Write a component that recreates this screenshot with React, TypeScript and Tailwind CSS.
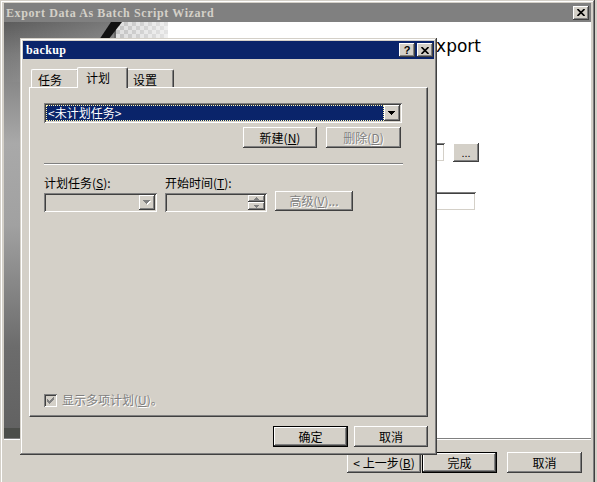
import React from "react";

// win2000 classic bevels
const face = "bg-[#d4d0c8]";
const raised = "shadow-[inset_-1px_-1px_0_#404040,inset_1px_1px_0_#ffffff,inset_-2px_-2px_0_#808080]";
const frame = "shadow-[inset_-1px_-1px_0_#404040,inset_1px_1px_0_#d4d0c8,inset_-2px_-2px_0_#808080,inset_2px_2px_0_#ffffff]";
const sunken = "shadow-[inset_1px_1px_0_#808080,inset_-1px_-1px_0_#ffffff,inset_2px_2px_0_#404040,inset_-2px_-2px_0_#d4d0c8]";
const cjk = "font-['Noto_Sans_CJK_SC','Noto_Sans',sans-serif]";
const grayText = "text-[#808080] [text-shadow:1px_1px_0_#ffffff]";

function Key({ k }: { k: string }) {
  return (
    <>
      (<span className="underline underline-offset-1">{k}</span>)
    </>
  );
}

function Button({
  className = "",
  isDefault = false,
  disabled = false,
  children,
}: {
  className?: string;
  isDefault?: boolean;
  disabled?: boolean;
  children: React.ReactNode;
}) {
  return (
    <div className={`${className} ${isDefault ? "border border-black" : ""} flex`}>
      <div
        className={`flex-1 flex items-center justify-center ${face} ${raised} text-[12px] leading-[14px] whitespace-nowrap ${
          disabled ? grayText : "text-black"
        }`}
      >
        {children}
      </div>
    </div>
  );
}

function CapBtn({ className = "", children }: { className?: string; children: React.ReactNode }) {
  return (
    <div className={`w-[16px] h-[14px] ${face} ${raised} flex items-center justify-center ${className}`}>
      {children}
    </div>
  );
}

function XGlyph() {
  return (
    <svg width="8" height="7" viewBox="0 0 8 7" className="block">
      <path d="M0.5 0 L7.5 7 M7.5 0 L0.5 7" stroke="#000" strokeWidth="1.6" />
    </svg>
  );
}

function Arrow({ gray = false }: { gray?: boolean }) {
  return (
    <svg width="8" height="5" viewBox="0 0 8 5" className="block" shapeRendering="crispEdges">
      {gray && <path d="M1 1h7v1h-1v1h-1v1h-1v1h-1v-1h-1v-1h-1v-1h-1z" fill="#ffffff" />}
      <path d="M0 0h7v1h-1v1h-1v1h-1v1h-1v-1h-1v-1h-1v-1h-1z" fill={gray ? "#808080" : "#000"} />
    </svg>
  );
}

function SpinArrow({ up }: { up?: boolean }) {
  return (
    <svg width="5" height="3" viewBox="0 0 5 3" className="block" shapeRendering="crispEdges">
      {up ? (
        <path d="M2 0h1v1h1v1h1v1h-5v-1h1v-1h1z" fill="#808080" />
      ) : (
        <path d="M0 0h5v1h-1v1h-1v1h-1v-1h-1v-1h-1z" fill="#808080" />
      )}
    </svg>
  );
}

function Banner() {
  return (
    <svg width="164" height="416" className="block">
      <defs>
        <linearGradient id="bn" x1="0" y1="0" x2="0" y2="1">
          <stop offset="0" stopColor="#5c5c5c" />
          <stop offset="0.08" stopColor="#7a7a7a" />
          <stop offset="0.3" stopColor="#a9a9a9" />
          <stop offset="0.5" stopColor="#a1a1a1" />
          <stop offset="0.8" stopColor="#6c6c6c" />
          <stop offset="1" stopColor="#626262" />
        </linearGradient>
        <linearGradient id="hz" x1="0" y1="0" x2="1" y2="0">
          <stop offset="0" stopColor="#ffffff" stopOpacity="0" />
          <stop offset="1" stopColor="#ffffff" stopOpacity="0.18" />
        </linearGradient>
        <pattern id="chk" width="8" height="8" patternUnits="userSpaceOnUse">
          <rect width="8" height="8" fill="#dedede" />
          <rect width="4" height="4" fill="#c2c2c2" />
          <rect x="4" y="4" width="4" height="4" fill="#c2c2c2" />
        </pattern>
        <linearGradient id="fade" x1="0" y1="0" x2="1" y2="0">
          <stop offset="0" stopColor="#ffffff" stopOpacity="0" />
          <stop offset="1" stopColor="#ffffff" stopOpacity="0.55" />
        </linearGradient>
      </defs>
      <rect width="164" height="406" fill="url(#bn)" />
      <rect width="110" height="60" fill="url(#hz)" />
      <rect y="406" width="164" height="10" fill="#4c4e4a" />
      <rect x="112" width="52" height="60" fill="url(#chk)" />
      <rect x="112" width="52" height="60" fill="url(#fade)" />
      <polygon points="107,0 118,0 104,18 95,18" fill="#111111" />
    </svg>
  );
}

function Tab({ label, active = false }: { label: string; active?: boolean }) {
  return (
    <div
      className={`${face} border-t border-l border-r border-t-white border-l-white border-r-[#404040] shadow-[inset_-1px_0_0_#808080] rounded-tl-[2px] rounded-tr-[2px] text-[12px] leading-[14px] text-black pt-[3px] ${
        active ? "w-[51px] h-[21px] -mx-[2px] -mb-[1px] pl-[8px] relative z-10" : "w-[48px] h-[18px] pl-[6px]"
      }`}
    >
      {label}
    </div>
  );
}

export default function App() {
  return (
    <div className={`relative w-[597px] h-[482px] overflow-hidden ${face} ${cjk}`}>
      {/* wizard behind */}
      <div className={`absolute left-0 top-0 w-[595px] h-[500px] ${face} ${frame} px-[4px] pt-[3px] flex flex-col`}>
        <div className="h-[19px] bg-[#808080] flex items-center justify-between pl-[2px] pr-[2px]">
          <span className="font-['Liberation_Serif',serif] font-bold text-[12px] leading-[14px] tracking-[0.6px] text-[#d4d0c8]">
            Export Data As Batch Script Wizard
          </span>
          <CapBtn>
            <XGlyph />
          </CapBtn>
        </div>
        <div className="flex h-[416px]">
          <div className="w-[164px]">
            <Banner />
          </div>
          <div className="flex-1 bg-white flex flex-col">
            <div className="mt-[14px] ml-[20px] w-[293px] flex justify-end whitespace-nowrap font-['DejaVu_Sans',sans-serif] text-[17px] leading-[20px] text-black">
              export
            </div>
            <div className="mt-[87px] ml-[77px] flex items-center gap-[8px]">
              <div className={`w-[200px] h-[19px] bg-white ${sunken}`} />
              <Button className="w-[26px] h-[19px]">
                <span className="font-['Liberation_Sans',sans-serif] text-[11px]">...</span>
              </Button>
            </div>
            <div className={`mt-[30px] ml-[77px] w-[231px] h-[19px] bg-white ${sunken}`} />
          </div>
        </div>
        <div className="h-[2px] border-t border-t-[#808080] border-b border-b-white" />
        <div className="flex justify-end pt-[12px] pr-[9px]">
          <Button className="w-[74px] h-[21px]">&lt; 上一步<Key k="B" /></Button>
          <Button className="w-[75px] h-[21px] ml-[1px]" isDefault>
            完成
          </Button>
          <Button className="w-[75px] h-[21px] ml-[10px]">取消</Button>
        </div>
      </div>

      {/* backup dialog */}
      <div className={`absolute left-[20px] top-[38px] w-[417px] h-[417px] ${face} ${frame} p-[3px] flex flex-col`}>
        <div className="h-[18px] bg-[#0a246a] flex items-center pl-[3px] pr-[1px]">
          <span className="flex-1 font-['Liberation_Serif',serif] font-bold text-white text-[12px] leading-[14px] tracking-[0.4px]">
            backup
          </span>
          <CapBtn>
            <span className="font-['Liberation_Sans',sans-serif] font-bold text-[11px] leading-[12px] text-black">?</span>
          </CapBtn>
          <CapBtn className="ml-[2px]">
            <XGlyph />
          </CapBtn>
        </div>

        <div className="flex flex-col px-[6px]">
          <div className="mt-[8px] h-[20px] flex items-end pl-[2px]">
            <Tab label="任务" />
            <Tab label="计划" active />
            <Tab label="设置" />
          </div>

          <div className="h-[330px] bg-[#d4d0c8] border border-t-white border-l-white border-r-[#404040] border-b-[#404040] shadow-[inset_-1px_-1px_0_#808080] flex flex-col pl-[14px] pt-[15px] pb-[9px] text-[12px] leading-[14px]">
            <div className={`w-[358px] h-[20px] bg-white ${sunken} p-[2px] flex`}>
              <div className="flex-1 bg-[#0a246a] outline outline-1 outline-dotted outline-[#fff8b0] -outline-offset-1 text-white leading-[16px] pl-[2px]">
                &lt;未计划任务&gt;
              </div>
              <div className={`w-[16px] ${face} ${raised} flex items-center justify-center`}>
                <Arrow />
              </div>
            </div>

            <div className="w-[358px] mt-[4px] flex justify-end gap-[9px] pr-[1px]">
              <Button className="w-[74px] h-[21px]">
                新建<Key k="N" />
              </Button>
              <Button className="w-[75px] h-[21px]" disabled>
                删除<Key k="D" />
              </Button>
            </div>

            <div className="w-[359px] mt-[15px] h-[2px] border-t border-t-[#808080] border-b border-b-white" />

            <div className="mt-[11px] flex text-black">
              <span className="w-[121px]">
                计划任务<Key k="S" />:
              </span>
              <span>
                开始时间<Key k="T" />:
              </span>
            </div>

            <div className="mt-[3px] flex items-start">
              <div className={`w-[113px] h-[19px] ${face} ${sunken} p-[2px] flex justify-end`}>
                <div className={`w-[16px] ${face} ${raised} flex items-center justify-center`}>
                  <Arrow gray />
                </div>
              </div>
              <div className={`ml-[8px] w-[102px] h-[19px] ${face} ${sunken} p-[2px] flex justify-end`}>
                <div className="w-[17px] flex flex-col">
                  <div className={`h-[7px] ${face} ${raised} flex items-center justify-center`}>
                    <SpinArrow up />
                  </div>
                  <div className={`h-[8px] ${face} ${raised} flex items-center justify-center`}>
                    <SpinArrow />
                  </div>
                </div>
              </div>
              <Button className="ml-[8px] -mt-[2px] w-[78px] h-[20px]" disabled>
                高级<Key k="V" />...
              </Button>
            </div>

            <div className="mt-auto flex items-center gap-[5px]">
              <div className={`w-[13px] h-[13px] ${face} ${sunken} flex items-center justify-center`}>
                <svg width="7" height="7" viewBox="0 0 7 7" className="block" shapeRendering="crispEdges">
                  <path d="M6 0h1v3h-1v1h-1v1h-1v1h-1v1h-1v-1h-1v-1h-1v-3h1v1h1v1h1v-1h1v-1h1z" fill="#808080" />
                </svg>
              </div>
              <span className={grayText}>
                显示多项计划<Key k="U" />。
              </span>
            </div>
          </div>

          <div className="mt-[9px] flex justify-end gap-[6px]">
            <Button className="w-[75px] h-[21px]" isDefault>
              确定
            </Button>
            <Button className="w-[74px] h-[21px]">取消</Button>
          </div>
        </div>
      </div>
    </div>
  );
}
